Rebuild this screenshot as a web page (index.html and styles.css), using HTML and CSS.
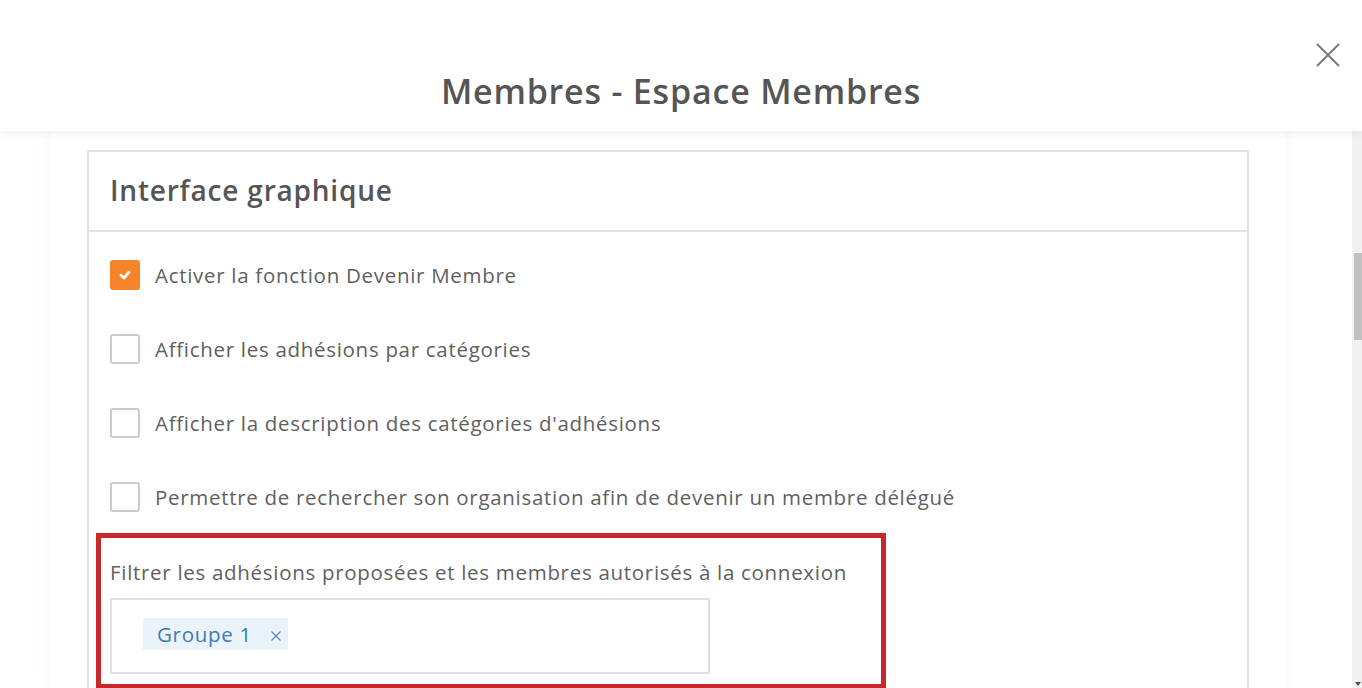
FILE: index.html
```html
<!DOCTYPE html>
<html lang="fr">
<head>
    <meta charset="UTF-8">
    <meta name="viewport" content="width=device-width, initial-scale=1.0">
    <title>Membres - Espace Membres</title>
    <link rel="stylesheet" href="styles.css">
</head>
<body>
    <header class="modal-header">
        <h1>Membres - Espace Membres</h1>
        <button class="close-button" aria-label="Fermer">
            <svg width="26" height="26" viewBox="0 0 26 26">
                <path d="M2 2 L24 24 M24 2 L2 24" stroke="#7a7a7a" stroke-width="2" fill="none"/>
            </svg>
        </button>
    </header>

    <div class="page">
        <main class="panel">
            <section class="card">
                <div class="card-header">
                    <h2>Interface graphique</h2>
                </div>
                <div class="card-body">
                    <label class="check-row">
                        <span class="checkbox checked">
                            <svg width="14" height="14" viewBox="0 0 14 14">
                                <path d="M3 7.3 L5.9 10 L11 4.2" stroke="#fff" stroke-width="2.8" fill="none" stroke-linecap="round" stroke-linejoin="round"/>
                            </svg>
                        </span>
                        <span>Activer la fonction Devenir Membre</span>
                    </label>
                    <label class="check-row">
                        <span class="checkbox"></span>
                        <span>Afficher les adhésions par catégories</span>
                    </label>
                    <label class="check-row">
                        <span class="checkbox"></span>
                        <span>Afficher la description des catégories d'adhésions</span>
                    </label>
                    <label class="check-row">
                        <span class="checkbox"></span>
                        <span>Permettre de rechercher son organisation afin de devenir un membre délégué</span>
                    </label>

                    <div class="filter-group">
                        <p class="filter-label">Filtrer les adhésions proposées et les membres autorisés à la connexion</p>
                        <div class="tag-input">
                            <span class="tag">Groupe 1
                                <svg class="tag-remove" width="12" height="12" viewBox="0 0 12 12">
                                    <path d="M1.5 1.5 L10.5 10.5 M10.5 1.5 L1.5 10.5" stroke="#5a86b0" stroke-width="1.2" fill="none"/>
                                </svg>
                            </span>
                        </div>
                    </div>
                </div>
            </section>
        </main>
        <div class="scrollbar">
            <div class="scroll-thumb"></div>
            <div class="scroll-arrow"></div>
        </div>
    </div>
</body>
</html>
```

FILE: styles.css
```css
:root {
    --text-primary: #555555;
    --text-body: #606060;
    --orange: #f7832a;
    --border-color: #e2e2e2;
    --input-border: #dde1e5;
    --annotation: #c8282c;
    --tag-bg: #ebf3fa;
    --tag-text: #3f7bb0;
}

* {
    margin: 0;
    padding: 0;
    box-sizing: border-box;
}

html, body {
    height: 100%;
    overflow: hidden;
}

body {
    font-family: 'Open Sans', 'Noto Sans', sans-serif;
    color: var(--text-body);
    background: #ffffff;
    display: flex;
    flex-direction: column;
}

.modal-header {
    position: relative;
    z-index: 2;
    height: 131px;
    flex-shrink: 0;
    background: #ffffff;
    box-shadow: 0 3px 8px rgba(0, 0, 0, 0.06);
    display: flex;
    align-items: flex-end;
    justify-content: center;
    padding-bottom: 17px;
}

.modal-header h1 {
    font-size: 34px;
    font-weight: 600;
    line-height: 46px;
    letter-spacing: 0.8px;
    color: var(--text-primary);
}

.close-button {
    position: absolute;
    top: 42px;
    right: 21px;
    border: none;
    background: none;
    cursor: pointer;
    line-height: 0;
}

.page {
    flex: 1;
    display: flex;
    min-height: 0;
}

.panel {
    flex: 1;
    display: flex;
    padding: 0 0 0 50px;
}

.card {
    width: 1235px;
    padding: 19px 36px 0 37px;
    background: #ffffff;
    box-shadow: 0 0 14px rgba(70, 90, 230, 0.07);
}

.card-header {
    border: 2px solid var(--border-color);
    height: 82px;
    display: flex;
    align-items: center;
    padding: 0 0 3px 21px;
}

.card-header h2 {
    font-size: 28px;
    font-weight: 600;
    letter-spacing: 0.8px;
    color: var(--text-primary);
}

.card-body {
    border: 2px solid var(--border-color);
    border-top: none;
    height: 600px;
    padding: 28px 21px 0 21px;
}

.check-row {
    display: flex;
    align-items: center;
    gap: 15px;
    font-size: 20.5px;
    letter-spacing: 0.7px;
    height: 30px;
    margin-bottom: 44px;
    cursor: pointer;
}

.checkbox {
    width: 30px;
    height: 30px;
    border: 2px solid #c9cdd2;
    border-radius: 3px;
    flex-shrink: 0;
    display: flex;
    align-items: center;
    justify-content: center;
}

.checkbox.checked {
    background: var(--orange);
    border-color: var(--orange);
}

.filter-group {
    width: 790px;
    margin: -23px 0 0 -14px;
    border: 5px solid var(--annotation);
    padding: 21px 0 10px 9px;
}

.filter-label {
    font-size: 20.5px;
    letter-spacing: 0.7px;
    line-height: 26px;
    margin-bottom: 13px;
}

.tag-input {
    width: 600px;
    height: 76px;
    border: 2px solid var(--input-border);
    padding: 18px 0 0 31px;
}

.tag {
    display: inline-flex;
    align-items: center;
    height: 32px;
    padding: 0 6px 0 14px;
    background: var(--tag-bg);
    color: var(--tag-text);
    font-size: 20.5px;
    letter-spacing: 0.7px;
}

.tag-remove {
    margin-left: 18px;
    margin-top: 3px;
}

.scrollbar {
    width: 10px;
    flex-shrink: 0;
    background: #f1f1f1;
    display: flex;
    flex-direction: column;
    align-items: flex-end;
    padding-top: 122px;
}

.scroll-thumb {
    width: 8px;
    height: 87px;
    background: #c1c1c1;
}

.scroll-arrow {
    margin-top: auto;
    margin-bottom: 2px;
    margin-right: 1px;
    width: 0;
    height: 0;
    border-left: 3px solid transparent;
    border-right: 3px solid transparent;
    border-top: 4px solid #505050;
}
```
